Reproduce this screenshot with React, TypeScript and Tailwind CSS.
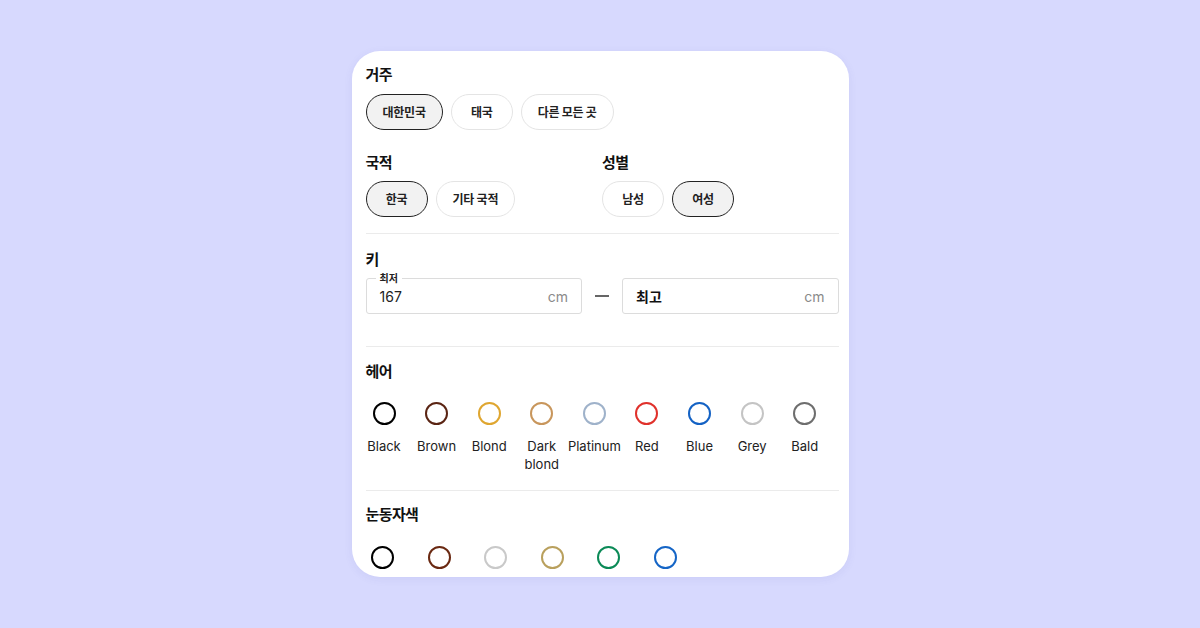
import React from "react";

const KR = { fontFamily: '"Noto Sans CJK KR", "Noto Sans", sans-serif' };
const LAT = { fontFamily: 'Inter, "Noto Sans CJK KR", sans-serif' };

function Heading({ children }: { children: React.ReactNode }) {
  return (
    <div className="h-5 text-[15px] leading-5 font-bold text-[#111] tracking-[-0.04em]" style={KR}>
      {children}
    </div>
  );
}

function Chip({ label, selected }: { label: string; selected?: boolean }) {
  return (
    <div
      className={
        "h-9 min-w-[62px] px-4 rounded-full flex items-center justify-center text-[12px] font-bold tracking-[-0.02em] text-[#222] " +
        (selected ? "bg-[#f2f2f2] border-[1.5px] border-[#222]" : "bg-white border border-[#e4e4e4]")
      }
      style={KR}
    >
      {label}
    </div>
  );
}

function Divider() {
  return <div className="h-px bg-[#ebebeb] w-full" />;
}

const hair = [
  { c: "#000000", l: "Black" },
  { c: "#5a2413", l: "Brown" },
  { c: "#dfa630", l: "Blond" },
  { c: "#c8965c", l: "Dark blond" },
  { c: "#9fb2ca", l: "Platinum" },
  { c: "#e0312b", l: "Red" },
  { c: "#1462c4", l: "Blue" },
  { c: "#c4c4c4", l: "Grey" },
  { c: "#6e6e6e", l: "Bald" },
];

const eyes = ["#000000", "#6a2912", "#c9c9c9", "#b9a05d", "#0b8a57", "#1565c6"];

export default function App() {
  return (
    <div className="w-[1200px] h-[628px] bg-[#d7d9fe] flex items-center justify-center">
      <div className="w-[497px] h-[526px] bg-white rounded-[28px] overflow-hidden pl-[14px] pr-[10px] pt-[13px] shadow-[0_2px_8px_rgba(80,80,160,0.08)]">
        <Heading>거주</Heading>
        <div className="flex gap-2 mt-[10px]">
          <Chip label="대한민국" selected />
          <Chip label="태국" />
          <Chip label="다른 모든 곳" />
        </div>

        <div className="grid grid-cols-2 mt-[22px]">
          <div>
            <Heading>국적</Heading>
            <div className="flex gap-2 mt-[9px]">
              <Chip label="한국" selected />
              <Chip label="기타 국적" />
            </div>
          </div>
          <div>
            <Heading>성별</Heading>
            <div className="flex gap-2 mt-[9px]">
              <Chip label="남성" />
              <Chip label="여성" selected />
            </div>
          </div>
        </div>

        <div className="mt-4">
          <Divider />
        </div>

        <div className="mt-[15px]">
          <Heading>키</Heading>
        </div>
        <div className="flex items-center gap-[13px] mt-[9px]">
          <div className="relative flex-1 h-[36px] border border-[#dcdcdc] rounded-[3px] flex items-center justify-between px-[13px]">
            <span
              className="absolute left-[9px] -top-[8px] bg-white px-[4px] text-[10px] leading-[14px] font-bold text-[#222]"
              style={KR}
            >
              최저
            </span>
            <span className="text-[14px] text-[#222]" style={LAT}>167</span>
            <span className="text-[14px] text-[#8a8a8a]" style={LAT}>cm</span>
          </div>
          <div className="w-[14px] h-[2px] bg-[#666]" />
          <div className="flex-1 h-[36px] border border-[#dcdcdc] rounded-[3px] flex items-center justify-between px-[13px]">
            <span className="text-[14px] font-bold text-[#111]" style={KR}>최고</span>
            <span className="text-[14px] text-[#8a8a8a]" style={LAT}>cm</span>
          </div>
        </div>

        <div className="mt-[32px]">
          <Divider />
        </div>

        <div className="mt-[14px]">
          <Heading>헤어</Heading>
        </div>
        <div className="flex gap-[15.6px] mt-[21px] h-[88px]">
          {hair.map((h) => (
            <div key={h.l} className="w-[37px] flex flex-col items-center">
              <div
                className="w-[23px] h-[23px] rounded-full border-[2.5px] shrink-0"
                style={{ borderColor: h.c }}
              />
              <div
                className="w-[62px] shrink-0 mt-[12px] text-center text-[13px] leading-[18px] text-[#222]"
                style={LAT}
              >
                {h.l}
              </div>
            </div>
          ))}
        </div>

        <Divider />

        <div className="mt-[13px]">
          <Heading>눈동자색</Heading>
        </div>
        <div className="flex gap-[22.6px] mt-[22px]">
          {eyes.map((c, i) => (
            <div key={i} className="w-[34px] flex justify-center">
              <div
                className="w-[23px] h-[23px] rounded-full border-[2.5px]"
                style={{ borderColor: c }}
              />
            </div>
          ))}
        </div>
      </div>
    </div>
  );
}
